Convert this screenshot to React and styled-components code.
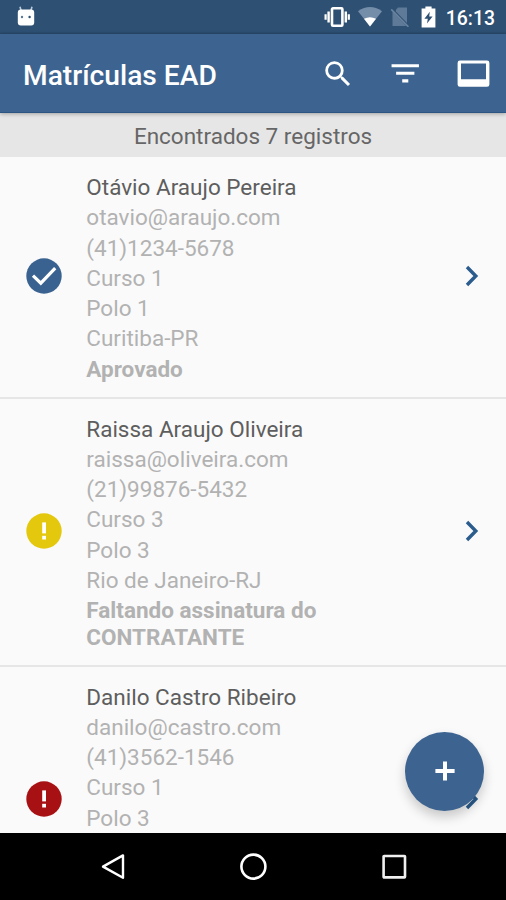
import React from 'react'
import styled, { createGlobalStyle } from 'styled-components'
import { MdSearch, MdFilterList } from 'react-icons/md'

const registros = [
    {
        nome: 'Otávio Araujo Pereira',
        email: 'otavio@araujo.com',
        telefone: '(41)1234-5678',
        curso: 'Curso 1',
        polo: 'Polo 1',
        cidade: 'Curitiba-PR',
        situacao: 'Aprovado',
        tipo: 'ok',
    },
    {
        nome: 'Raissa Araujo Oliveira',
        email: 'raissa@oliveira.com',
        telefone: '(21)99876-5432',
        curso: 'Curso 3',
        polo: 'Polo 3',
        cidade: 'Rio de Janeiro-RJ',
        situacao: 'Faltando assinatura do CONTRATANTE',
        tipo: 'aviso',
    },
    {
        nome: 'Danilo Castro Ribeiro',
        email: 'danilo@castro.com',
        telefone: '(41)3562-1546',
        curso: 'Curso 1',
        polo: 'Polo 3',
        tipo: 'erro',
    },
]

const cores = {
    ok: '#3a6290',
    aviso: '#e3c80e',
    erro: '#a81113',
}

function StatusIcon({ tipo }) {
    return (
        <svg width="36" height="36" viewBox="0 0 36 36">
            <circle cx="18" cy="18" r="17.7" fill={cores[tipo]} />
            {tipo === 'ok' ? (
                <path d="M7 17.6L14.8 25.2L29.2 10.2" fill="none" stroke="#fff" strokeWidth="3.2" />
            ) : (
                <>
                    <rect x="16.2" y="9.4" width="3.8" height="11" fill="#fff" />
                    <rect x="16.2" y="22.8" width="3.8" height="3.7" fill="#fff" />
                </>
            )}
        </svg>
    )
}

function Registro({ item }) {
    return (
        <RowStyled $minHeight={item.tipo === 'ok' ? 241 : 268}>
            <StatusIcon tipo={item.tipo} />
            <div className="info">
                <p className="nome">{item.nome}</p>
                <p>{item.email}</p>
                <p>{item.telefone}</p>
                <p>{item.curso}</p>
                <p>{item.polo}</p>
                {item.cidade && <p>{item.cidade}</p>}
                {item.situacao && <p className="situacao">{item.situacao}</p>}
            </div>
            <svg width="14" height="22" viewBox="0 0 14 22">
                <path d="M2 2L10.8 11L2 20" fill="none" stroke="#2a5c8e" strokeWidth="3.4" />
            </svg>
        </RowStyled>
    )
}

function StatusBar() {
    return (
        <StatusBarStyled>
            <svg width="18" height="20" viewBox="0 0 18 20">
                <path d="M4.2 5L3 0.8M13.8 5L15 0.8" stroke="#b9cadb" strokeWidth="1.6" />
                <rect x="0.8" y="3.6" width="16.4" height="15.8" rx="3" fill="#fff" />
                <circle cx="5" cy="11" r="1.2" fill="#5b7898" />
                <circle cx="12.6" cy="11" r="1.2" fill="#2e5073" />
            </svg>
            <div className="right">
                <svg className="vibration" width="26" height="20" viewBox="0 0 26 20">
                    <rect x="8" y="1.3" width="10.4" height="17.4" rx="1" fill="none" stroke="#fff" strokeWidth="2.6" />
                    <path d="M4.6 4.5V15.5M21.8 4.5V15.5" stroke="#fff" strokeWidth="2.4" />
                    <path d="M1.6 7.2V12.8M24.8 7.2V12.8" stroke="#fff" strokeWidth="2.2" />
                </svg>
                <svg className="wifi" width="24" height="20" viewBox="0 0 24 20">
                    <path d="M0 4.2Q12 -4 24 4.2L12 19.6Z" fill="#748da9" />
                    <path d="M6 11.8Q12 8.6 18 11.8L12 19.6Z" fill="#fff" />
                </svg>
                <svg className="sim" width="20" height="20" viewBox="0 0 20 20">
                    <path d="M8 0.6H17V16L5.9 4.4V2.8Z" fill="#5f7a98" />
                    <path d="M2.5 4.4V19H16.2Z" fill="#5f7a98" />
                    <path d="M1.2 2.4L18.4 19.8" stroke="#6a84a0" strokeWidth="1.6" />
                </svg>
                <svg className="battery" width="15" height="22" viewBox="0 0 15 22">
                    <path d="M4.4 0.6H10.6V2.6H14.4V21.4H0.6V2.6H4.4Z" fill="#fff" />
                    <path d="M8.8 5.8L3.4 12.8H6.8L6 17.6L11.6 10.6H8.2Z" fill="#2e5073" />
                </svg>
                <span>16:13</span>
            </div>
        </StatusBarStyled>
    )
}

function App() {
    return (
        <>
            <GlobalStyle />
            <AppStyled>
                <StatusBar />
                <ToolbarStyled>
                    <h1>Matrículas EAD</h1>
                    <ToolButton $width={67}>
                        <MdSearch size={34} />
                    </ToolButton>
                    <ToolButton $width={69}>
                        <MdFilterList size={36.5} />
                    </ToolButton>
                    <ToolButton $width={66}>
                        <svg width="33" height="28" viewBox="0 0 33 28">
                            <path
                                d="M3 0.6H30A2.4 2.4 0 0 1 32.4 3V24.4A2.4 2.4 0 0 1 30 26.8H3A2.4 2.4 0 0 1 0.6 24.4V3A2.4 2.4 0 0 1 3 0.6ZM4 3.6V19.2H29V3.6Z"
                                fill="#fff"
                                fillRule="evenodd"
                            />
                        </svg>
                    </ToolButton>
                </ToolbarStyled>
                <CounterStyled>Encontrados 7 registros</CounterStyled>
                <ListStyled>
                    {registros.map((item) => (
                        <Registro key={item.nome} item={item} />
                    ))}
                </ListStyled>
                <AddButton>
                    <svg width="20" height="20" viewBox="0 0 20 20">
                        <path d="M10 0.4V19.6M0.4 10H19.6" stroke="#fff" strokeWidth="4" />
                    </svg>
                </AddButton>
                <NavBarStyled>
                    <svg width="28" height="28" viewBox="0 0 28 28">
                        <path d="M4 13.6L24 2.4V24.8Z" fill="none" stroke="#fff" strokeWidth="2.4" strokeLinejoin="round" />
                    </svg>
                    <svg width="28" height="28" viewBox="0 0 28 28">
                        <circle cx="14.4" cy="13.6" r="12" fill="none" stroke="#fff" strokeWidth="2.6" />
                    </svg>
                    <svg width="28" height="28" viewBox="0 0 28 28">
                        <rect x="3.6" y="3" width="21.4" height="21.4" rx="0.6" fill="none" stroke="#f0f0f0" strokeWidth="2.6" />
                    </svg>
                </NavBarStyled>
            </AppStyled>
        </>
    )
}

const GlobalStyle = createGlobalStyle`
    * {
        box-sizing: border-box;
        margin: 0;
        padding: 0;
    }

    body {
        font-family: Roboto, 'Liberation Sans', sans-serif;
        background: #000;
    }

    svg {
        display: block;
        flex-shrink: 0;
    }
`

const AppStyled = styled.div`
    position: relative;
    display: flex;
    flex-direction: column;
    width: 506px;
    height: 900px;
    overflow: hidden;
    background: #fafafa;
`

const StatusBarStyled = styled.div`
    height: 34px;
    flex-shrink: 0;
    display: flex;
    align-items: center;
    justify-content: space-between;
    padding: 0 11px 2px 17px;
    background: linear-gradient(to bottom, #2e5073 31px, #28486b 34px);

    .right {
        display: flex;
        align-items: center;
        padding-top: 2px;
    }

    .wifi {
        margin-left: 8px;
    }

    .sim {
        margin-left: 8px;
    }

    .battery {
        margin-left: 11px;
    }

    span {
        margin-left: 9.5px;
        font-size: 19.4px;
        font-weight: 500;
        line-height: 24px;
        color: #fff;
        padding-top: 3px;
    }
`

const ToolbarStyled = styled.div`
    position: relative;
    z-index: 1;
    height: 79px;
    flex-shrink: 0;
    display: flex;
    align-items: center;
    padding-left: 23px;
    background: #3d6490;
    border-bottom: 1px solid #2c5584;
    box-shadow: 0 1px 4px rgba(0, 0, 0, 0.3);

    h1 {
        flex: 1;
        font-size: 28.2px;
        font-weight: 500;
        line-height: 34px;
        padding-top: 5px;
        color: #fff;
        white-space: nowrap;
    }
`

const ToolButton = styled.button`
    width: ${(props) => props.$width}px;
    height: 56px;
    display: flex;
    align-items: center;
    justify-content: center;
    padding-top: 1px;
    border: none;
    background: none;
    color: #fff;
`

const CounterStyled = styled.div`
    height: 44px;
    flex-shrink: 0;
    padding-top: 2px;
    text-align: center;
    font-size: 22.5px;
    line-height: 42px;
    color: #666;
    background: #e6e6e6;
`

const ListStyled = styled.div`
    flex: 1;
    min-height: 0;
    overflow: hidden;
`

const RowStyled = styled.div`
    display: flex;
    align-items: center;
    min-height: ${(props) => props.$minHeight}px;
    padding: 17.1px 27px 14.6px 26px;
    border-bottom: 2px solid #e6e6e6;

    > svg {
        margin-bottom: 4px;
    }

    .info {
        flex: 1;
        align-self: flex-start;
        padding: 0 120px 0 24.3px;
    }

    p {
        font-size: 22.5px;
        line-height: 26.4px;
        color: #b2b2b2;
    }

    p + p {
        margin-top: 3.85px;
    }

    .nome {
        color: #5e5e5e;
        white-space: nowrap;
    }

    .situacao {
        font-weight: 700;
    }
`

const AddButton = styled.button`
    position: absolute;
    z-index: 2;
    right: 22px;
    bottom: 89.5px;
    width: 79px;
    height: 79px;
    display: flex;
    align-items: center;
    justify-content: center;
    border: none;
    border-radius: 50%;
    background: #3d6490;
    box-shadow: 0 6px 12px rgba(0, 0, 0, 0.2);
`

const NavBarStyled = styled.div`
    height: 67px;
    flex-shrink: 0;
    display: flex;
    align-items: center;
    justify-content: center;
    gap: 112.5px;
    background: #000;
`

export default App
